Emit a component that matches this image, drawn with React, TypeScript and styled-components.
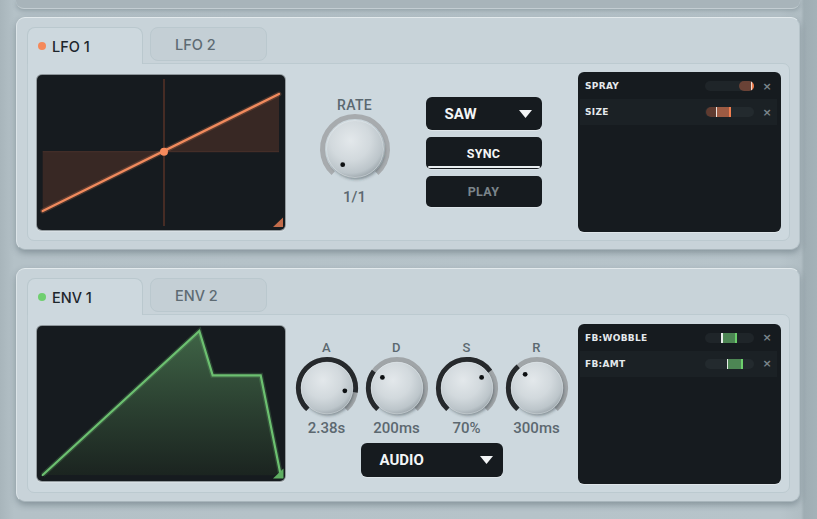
import React from "react";
import styled, { createGlobalStyle } from "styled-components";

const GlobalStyle = createGlobalStyle`
  html, body { margin: 0; padding: 0; }
  * { box-sizing: border-box; }
  body {
    width: 817px;
    height: 519px;
    overflow: hidden;
    background: linear-gradient(90deg, #a8b5bb 0px, #b4c1c7 14px, #b7c4ca 780px, #b0bdc3 801px, #9fadb3 804px, #a4b2b8 100%);
    font-family: Roboto, "Liberation Sans", sans-serif;
  }
`;

const Page = styled.div`
  display: flex;
  flex-direction: column;
  width: 817px;
  height: 519px;
  padding: 0 17px 0 16px;
`;

const TopPeek = styled.div`
  flex-shrink: 0;
  height: 9px;
  margin-bottom: 8px;
  background: #a8b4ba;
  border-bottom: 1px solid #c3cdd2;
  border-radius: 0 0 8px 8px;
  box-shadow: 0 2px 4px rgba(60, 75, 85, 0.25);
`;

const Panel = styled.section<{ $mt?: number; $h?: number }>`
  flex-shrink: 0;
  height: ${(p) => p.$h ?? 233}px;
  margin-top: ${(p) => p.$mt ?? 0}px;
  display: flex;
  flex-direction: column;
  padding: 9px 9px 8px 10px;
  background: #c8d3d9;
  border: 1px solid;
  border-color: #e3eaed #b7c4ca #a9b6bc #dce4e8;
  border-radius: 9px;
  box-shadow: 0 3px 6px rgba(50, 65, 75, 0.35);
`;

const TabRow = styled.div`
  position: relative;
  z-index: 1;
  display: flex;
  align-items: flex-start;
  gap: 7px;
  height: 36px;
`;

const Tab = styled.div<{ $active?: boolean }>`
  display: flex;
  align-items: center;
  gap: 6px;
  width: ${(p) => (p.$active ? 116 : 117)}px;
  height: ${(p) => (p.$active ? 37 : 34)}px;
  padding-left: ${(p) => (p.$active ? 10 : 24)}px;
  font-family: Inter, Roboto, sans-serif;
  font-size: 14.5px;
  font-weight: 500;
  color: ${(p) => (p.$active ? "#1d262c" : "#5e6b73")};
  background: ${(p) => (p.$active ? "#cdd8de" : "#c4cfd5")};
  border: 1px solid #bac8ce;
  border-bottom: ${(p) => (p.$active ? "none" : "1px solid #bac8ce")};
  border-radius: ${(p) => (p.$active ? "8px 8px 0 0" : "8px")};
`;

const Dot = styled.span<{ $color: string }>`
  width: 8px;
  height: 8px;
  border-radius: 50%;
  background: ${(p) => p.$color};
`;

const Content = styled.div`
  flex: 1;
  display: flex;
  align-items: center;
  padding: 0 8px 0 9px;
  background: #cdd8de;
  border: 1px solid #bccad0;
  border-radius: 0 7px 7px 7px;
`;

const Scope = styled.div`
  flex-shrink: 0;
  width: 248px;
  height: 155px;
  background: #161b1f;
  border-radius: 5px;
  overflow: hidden;
  box-shadow: 0 0 0 1px rgba(20, 25, 30, 0.35), 0 1px 1px 1px rgba(255, 255, 255, 0.25);
  svg {
    display: block;
  }
`;

const Middle = styled.div<{ $pt?: number; $pr?: number }>`
  flex: 1;
  display: flex;
  justify-content: center;
  align-items: center;
  padding-top: ${(p) => p.$pt ?? 0}px;
  padding-right: ${(p) => p.$pr ?? 0}px;
`;

const LfoGroup = styled.div`
  display: flex;
  align-items: center;
  gap: 35px;
`;

const KnobCol = styled.div`
  display: flex;
  flex-direction: column;
  align-items: center;
  width: 72px;
  svg {
    display: block;
  }
`;

const KnobLabel = styled.div<{ $size?: number }>`
  font-size: ${(p) => p.$size ?? 14}px;
  line-height: 14px;
  font-weight: 500;
  letter-spacing: 0.3px;
  color: #5b6870;
  margin-bottom: 1px;
`;

const KnobValue = styled.div<{ $mt?: number }>`
  margin-top: ${(p) => p.$mt ?? 0}px;
  font-size: 15px;
  line-height: 17px;
  font-weight: 500;
  color: #5c6870;
`;

const ButtonCol = styled.div`
  display: flex;
  flex-direction: column;
  gap: 7px;
  width: 116px;
`;

const Select = styled.div<{ $w: number; $h: number; $mt?: number }>`
  display: flex;
  align-items: center;
  justify-content: space-between;
  width: ${(p) => p.$w}px;
  height: ${(p) => p.$h}px;
  margin-top: ${(p) => p.$mt ?? 0}px;
  padding: 0 10px 0 19px;
  background: #161b1f;
  border-radius: 6px;
  color: #f3f5f6;
  font-size: 15px;
  font-weight: 700;
  box-shadow: 0 1px 0 rgba(255, 255, 255, 0.35);
  svg {
    display: block;
  }
`;

const Toggle = styled.div<{ $on?: boolean; $h: number }>`
  position: relative;
  display: flex;
  align-items: center;
  justify-content: center;
  height: ${(p) => p.$h}px;
  background: #161b1f;
  border-radius: 5px;
  font-size: 12.5px;
  font-weight: 700;
  letter-spacing: 0.3px;
  color: ${(p) => (p.$on ? "#f3f5f6" : "#7b858b")};
  box-shadow: 0 1px 0 rgba(255, 255, 255, 0.3);
  &::after {
    content: "";
    display: ${(p) => (p.$on ? "block" : "none")};
    position: absolute;
    left: 2px;
    right: 2px;
    bottom: 1px;
    height: 2px;
    border-radius: 1px;
    background: #e9eef0;
  }
`;

const EnvCol = styled.div`
  display: flex;
  flex-direction: column;
  align-items: center;
`;

const KnobRow = styled.div`
  display: flex;
  gap: 6px;
`;

const KnobUnit = styled.div`
  display: flex;
  flex-direction: column;
  align-items: center;
  width: 64px;
  svg {
    display: block;
  }
`;

const ModList = styled.div`
  flex-shrink: 0;
  display: flex;
  flex-direction: column;
  width: 203px;
  height: 160px;
  padding: 1px 4px 0 2px;
  background: #161b1f;
  border-radius: 6px;
  box-shadow: 0 1px 0 rgba(255, 255, 255, 0.35);
`;

const ModRow = styled.div<{ $alt?: boolean }>`
  display: flex;
  align-items: center;
  height: 26px;
  padding: 0 4px 0 5px;
  background: ${(p) => (p.$alt ? "#1b2125" : "transparent")};
`;

const ModName = styled.span`
  flex: 1;
  font-family: "DejaVu Sans", Verdana, sans-serif;
  font-size: 9px;
  font-weight: 700;
  letter-spacing: 0.3px;
  color: #e4e9ec;
`;

const Track = styled.div<{ $alt?: boolean }>`
  position: relative;
  width: 49px;
  height: 10px;
  border-radius: 5px;
  overflow: hidden;
  background: ${(p) => (p.$alt ? "#232a2e" : "#1f2529")};
`;

const Seg = styled.span`
  position: absolute;
  top: 0;
  bottom: 0;
`;

const Close = styled.span`
  width: 12px;
  margin-left: 7px;
  text-align: center;
  font-family: "DejaVu Sans", sans-serif;
  font-size: 11px;
  font-weight: 700;
  color: #7b868c;
`;

type SegDef = { l: number; w: number; c: string; round?: boolean };
type ModDef = { name: string; segs: SegDef[] };

const lfoMods: ModDef[] = [
  {
    name: "SPRAY",
    segs: [
      { l: 34.3, w: 11.7, c: "#6a4236", round: true },
      { l: 46, w: 1.3, c: "#efd9cf" },
      { l: 47.3, w: 2.2, c: "#f07e4f" },
    ],
  },
  {
    name: "SIZE",
    segs: [
      { l: 1, w: 10.5, c: "#5f3b30", round: true },
      { l: 11, w: 1.4, c: "#ece4df" },
      { l: 12.4, w: 11.8, c: "#9d5b43" },
      { l: 24, w: 2.4, c: "#f07e4f" },
    ],
  },
];

const envMods: ModDef[] = [
  {
    name: "FB:WOBBLE",
    segs: [
      { l: 16.2, w: 1.5, c: "#e9eeea" },
      { l: 17.7, w: 12.5, c: "#4d8654" },
      { l: 30.2, w: 2.2, c: "#6ccf6c" },
    ],
  },
  {
    name: "FB:AMT",
    segs: [
      { l: 21.8, w: 1.5, c: "#e9eeea" },
      { l: 23.3, w: 12.5, c: "#4d8654" },
      { l: 35.8, w: 2.4, c: "#6ccf6c" },
    ],
  },
];

function Mods({ items }: { items: ModDef[] }) {
  return (
    <ModList>
      {items.map((m, i) => (
        <ModRow key={m.name} $alt={i % 2 === 1}>
          <ModName>{m.name}</ModName>
          <Track $alt={i % 2 === 1}>
            {m.segs.map((s, j) => (
              <Seg
                key={j}
                style={{
                  left: s.l,
                  width: s.w,
                  background: s.c,
                  borderRadius: s.round ? "5px 0 0 5px" : 0,
                }}
              />
            ))}
          </Track>
          <Close>×</Close>
        </ModRow>
      ))}
    </ModList>
  );
}

const rad = (a: number) => (a * Math.PI) / 180;
function pt(cx: number, cy: number, r: number, a: number) {
  return [cx + r * Math.sin(rad(a)), cy - r * Math.cos(rad(a))];
}
function arc(cx: number, cy: number, r: number, a0: number, a1: number) {
  const [x0, y0] = pt(cx, cy, r, a0);
  const [x1, y1] = pt(cx, cy, r, a1);
  const large = a1 - a0 > 180 ? 1 : 0;
  return `M${x0.toFixed(2)} ${y0.toFixed(2)} A${r} ${r} 0 ${large} 1 ${x1.toFixed(2)} ${y1.toFixed(2)}`;
}

type KnobProps = {
  id: string;
  size: number;
  ringR: number;
  bodyR: number;
  angle: number;
  dark?: boolean;
  ringColor: string;
};

const START = -138;
const END = 138;

function Knob({ id, size, ringR, bodyR, angle, dark, ringColor }: KnobProps) {
  const c = size / 2;
  const [dx, dy] = pt(c, c, bodyR * 0.7, angle);
  return (
    <svg width={size} height={size} viewBox={`0 0 ${size} ${size}`}>
      <defs>
        <radialGradient id={`${id}-g`} cx="42%" cy="35%" r="70%">
          <stop offset="0" stopColor="#e3e8eb" />
          <stop offset="0.5" stopColor="#d2d9dd" />
          <stop offset="0.82" stopColor="#bcc5ca" />
          <stop offset="1" stopColor="#959fa5" />
        </radialGradient>
        <filter id={`${id}-s`} x="-30%" y="-30%" width="160%" height="160%">
          <feGaussianBlur stdDeviation="1.6" />
        </filter>
      </defs>
      <path d={arc(c, c, ringR, START, END)} stroke={ringColor} strokeWidth={5} fill="none" />
      {dark && angle > START && (
        <path d={arc(c, c, ringR, START, angle)} stroke="#26292c" strokeWidth={5} fill="none" />
      )}
      <circle cx={c + 1.2} cy={c + 2} r={bodyR} fill="rgba(40,52,58,0.45)" filter={`url(#${id}-s)`} />
      <circle cx={c} cy={c} r={bodyR} fill={`url(#${id}-g)`} stroke="rgba(240,244,246,0.55)" strokeWidth={0.8} />
      <circle cx={dx} cy={dy} r={2.4} fill="#0d1012" />
    </svg>
  );
}

function Caret() {
  return (
    <svg width="13" height="8" viewBox="0 0 13 8">
      <polygon points="0,0 13,0 6.5,8" fill="#f3f5f6" />
    </svg>
  );
}

function LfoScope() {
  const cx = 127;
  const cy = 76.7;
  return (
    <Scope>
      <svg width="248" height="155" viewBox="0 0 248 155">
        <polygon points={`5.7,${cy} ${cx},${cy} 5.7,136`} fill="#382824" />
        <polygon points={`${cx},${cy} 242,19 242,${cy}`} fill="#382824" />
        <line x1="5.7" y1={cy} x2="242" y2={cy} stroke="#4a322b" strokeWidth="1" />
        <line x1={cx} y1="4" x2={cx} y2="151" stroke="#5c3428" strokeWidth="1.4" />
        <line x1="5.7" y1="136" x2="242" y2="19" stroke="rgba(240,138,93,0.22)" strokeWidth="5" strokeLinecap="round" />
        <line x1="5.7" y1="136" x2="242" y2="19" stroke="#f08a5d" strokeWidth="2.3" strokeLinecap="round" />
        <circle cx={cx} cy={cy} r="4" fill="#f58a5c" />
        <polygon points="236,152 246,142.5 246,152" fill="#c26c4b" />
      </svg>
    </Scope>
  );
}

function EnvScope() {
  const line = "M5.7 149 L162.3 5 L175.7 49.3 L223.7 49.3 L243.7 149.3";
  return (
    <Scope>
      <svg width="248" height="155" viewBox="0 0 248 155">
        <defs>
          <linearGradient id="envfill" x1="0" y1="0" x2="0" y2="1">
            <stop offset="0" stopColor="#3f6446" />
            <stop offset="0.5" stopColor="#2c4232" />
            <stop offset="1" stopColor="#1b2420" />
          </linearGradient>
        </defs>
        <path d={`${line} Z`} fill="url(#envfill)" />
        <path d={line} fill="none" stroke="rgba(108,192,112,0.22)" strokeWidth="5" strokeLinejoin="miter" />
        <path d={line} fill="none" stroke="#6cc070" strokeWidth="2.2" strokeLinejoin="miter" strokeLinecap="round" />
        <polygon points="236,152.5 246.5,142.5 246.5,152.5" fill="#5fae62" />
      </svg>
    </Scope>
  );
}

const adsr = [
  { k: "A", v: "2.38s", a: 99 },
  { k: "D", v: "200ms", a: -54 },
  { k: "S", v: "70%", a: 54 },
  { k: "R", v: "300ms", a: -41 },
];

export default function App() {
  return (
    <>
      <GlobalStyle />
      <Page>
        <TopPeek />
        <Panel>
          <TabRow>
            <Tab $active>
              <Dot $color="#f5895a" />
              LFO 1
            </Tab>
            <Tab>LFO 2</Tab>
          </TabRow>
          <Content>
            <LfoScope />
            <Middle $pr={3}>
              <LfoGroup>
                <KnobCol>
                  <KnobLabel>RATE</KnobLabel>
                  <Knob id="rate" size={72} ringR={32.5} bodyR={28.5} angle={-142} ringColor="#a7abae" />
                  <KnobValue $mt={4}>1/1</KnobValue>
                </KnobCol>
                <ButtonCol>
                  <Select $w={116} $h={33}>
                    SAW
                    <Caret />
                  </Select>
                  <Toggle $on $h={32}>SYNC</Toggle>
                  <Toggle $h={31}>PLAY</Toggle>
                </ButtonCol>
              </LfoGroup>
            </Middle>
            <Mods items={lfoMods} />
          </Content>
        </Panel>
        <Panel $mt={18} $h={234}>
          <TabRow>
            <Tab $active>
              <Dot $color="#6fcf6f" />
              ENV 1
            </Tab>
            <Tab>ENV 2</Tab>
          </TabRow>
          <Content>
            <EnvScope />
            <Middle $pt={10}>
              <EnvCol>
                <KnobRow>
                  {adsr.map((d) => (
                    <KnobUnit key={d.k}>
                      <KnobLabel $size={13}>{d.k}</KnobLabel>
                      <Knob id={`k${d.k}`} size={64} ringR={28.6} bodyR={25.8} angle={d.a} dark ringColor="#a0a5a8" />
                      <KnobValue>{d.v}</KnobValue>
                    </KnobUnit>
                  ))}
                </KnobRow>
                <Select $w={142} $h={34} $mt={6}>
                  AUDIO
                  <Caret />
                </Select>
              </EnvCol>
            </Middle>
            <Mods items={envMods} />
          </Content>
        </Panel>
      </Page>
    </>
  );
}
